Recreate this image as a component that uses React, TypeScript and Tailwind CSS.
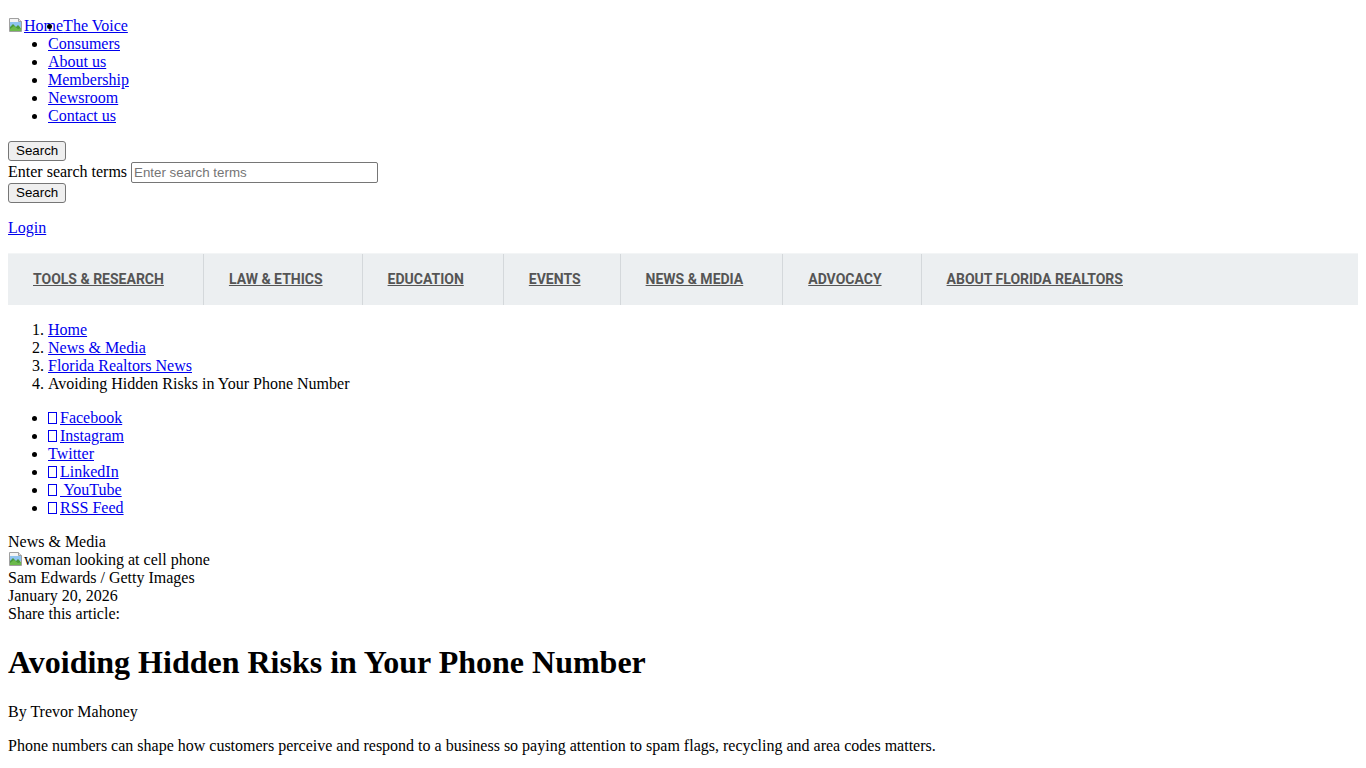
const navItems = [
  'TOOLS & RESEARCH',
  'LAW & ETHICS',
  'EDUCATION',
  'EVENTS',
  'NEWS & MEDIA',
  'ADVOCACY',
  'ABOUT FLORIDA REALTORS',
]

const topLinks = ['Consumers', 'About us', 'Membership', 'Newsroom', 'Contact us']

const socials = [
  { name: 'Facebook', box: true },
  { name: 'Instagram', box: true },
  { name: 'Twitter', box: false },
  { name: 'LinkedIn', box: true },
  { name: ' YouTube', box: true },
  { name: 'RSS Feed', box: true },
]

function BrokenImage() {
  return (
    <svg width="16" height="16" viewBox="0 0 16 16" className="inline-block align-[-2px]">
      <path d="M1.5 1.5h9l3 3v10h-12z" fill="#f4f4f4" stroke="#a0a0a0" />
      <path d="M10.5 1.5v3h3" fill="#e0e0e0" stroke="#a0a0a0" />
      <rect x="2" y="5" width="11" height="5" fill="#8fc3f0" />
      <path d="M2 14V10l3-3 3 3 2-2 3 3v3z" fill="#4a9a3a" />
      <path d="M2 14V12l4-3 4 3 3-1v3z" fill="#6cba4c" />
    </svg>
  )
}

function Tofu() {
  return <span className="inline-block w-[9px] h-[12px] border border-current mr-[3px] align-[-1px]" />
}

function Button({ children }: { children: React.ReactNode }) {
  return (
    <button className="bg-[#efefef] border border-[#767676] rounded-[3px] px-[7px] py-[1px] text-[13.33px] leading-[16px] text-black font-['Liberation_Sans',Arial,sans-serif]">
      {children}
    </button>
  )
}

export default function App() {
  const link = 'text-[#0000ee] underline'
  return (
    <div className="px-2 pt-[17px] pb-2 bg-white text-black text-base leading-[18px] font-['Liberation_Serif','Times_New_Roman',serif]">
      <div className="relative">
        <a href="#" className={link}>
          <BrokenImage />Home
        </a>
        <a href="#" className={link}>The Voice</a>
        <span className="absolute left-[39px] top-[7px] w-[5px] h-[5px] rounded-full bg-black" />
      </div>
      <ul className="list-disc pl-10 mb-4">
        {topLinks.map((t) => (
          <li key={t}>
            <a href="#" className={link}>{t}</a>
          </li>
        ))}
      </ul>

      <div>
        <Button>Search</Button>
      </div>
      <div className="flex items-center h-[22px]">
        <label>Enter search terms</label>
        <input
          placeholder="Enter search terms"
          className="ml-[4px] w-[247px] h-[21px] border border-[#767676] rounded-[2px] px-[2px] text-[13.33px] font-['Liberation_Sans',Arial,sans-serif] placeholder:text-[#757575]"
        />
      </div>
      <div>
        <Button>Search</Button>
      </div>
      <p className="my-4">
        <a href="#" className={link}>Login</a>
      </p>

      <nav className="flex h-[52px] bg-[#eceff1] border-t border-[#f3f5f6]">
        {navItems.map((n, i) => (
          <a
            key={n}
            href="#"
            className={
              'flex items-center pl-[25px] pr-[39px] pb-[1px] text-[14px] font-bold text-[#555] underline font-["Liberation_Sans_Narrow","Roboto",sans-serif] ' +
              (i < navItems.length - 1 ? 'border-r border-[#d4d8db]' : '')
            }
          >
            {n}
          </a>
        ))}
      </nav>

      <ol className="list-decimal pl-10 my-4">
        <li><a href="#" className={link}>Home</a></li>
        <li><a href="#" className={link}>News &amp; Media</a></li>
        <li><a href="#" className={link}>Florida Realtors News</a></li>
        <li>Avoiding Hidden Risks in Your Phone Number</li>
      </ol>

      <ul className="list-disc pl-10 my-4">
        {socials.map((s) => (
          <li key={s.name}>
            <a href="#" className={link}>
              {s.box && <Tofu />}
              {s.name}
            </a>
          </li>
        ))}
      </ul>

      <div>News &amp; Media</div>
      <div>
        <BrokenImage />woman looking at cell phone
      </div>
      <div>Sam Edwards / Getty Images</div>
      <div>January 20, 2026</div>
      <div>Share this article:</div>

      <h1 className="text-[32px] leading-[37px] font-bold my-[21.44px]">Avoiding Hidden Risks in Your Phone Number</h1>
      <p className="my-4">By Trevor Mahoney</p>
      <p className="my-4">
        Phone numbers can shape how customers perceive and respond to a business so paying attention to spam flags, recycling and area codes matters.
      </p>
    </div>
  )
}
